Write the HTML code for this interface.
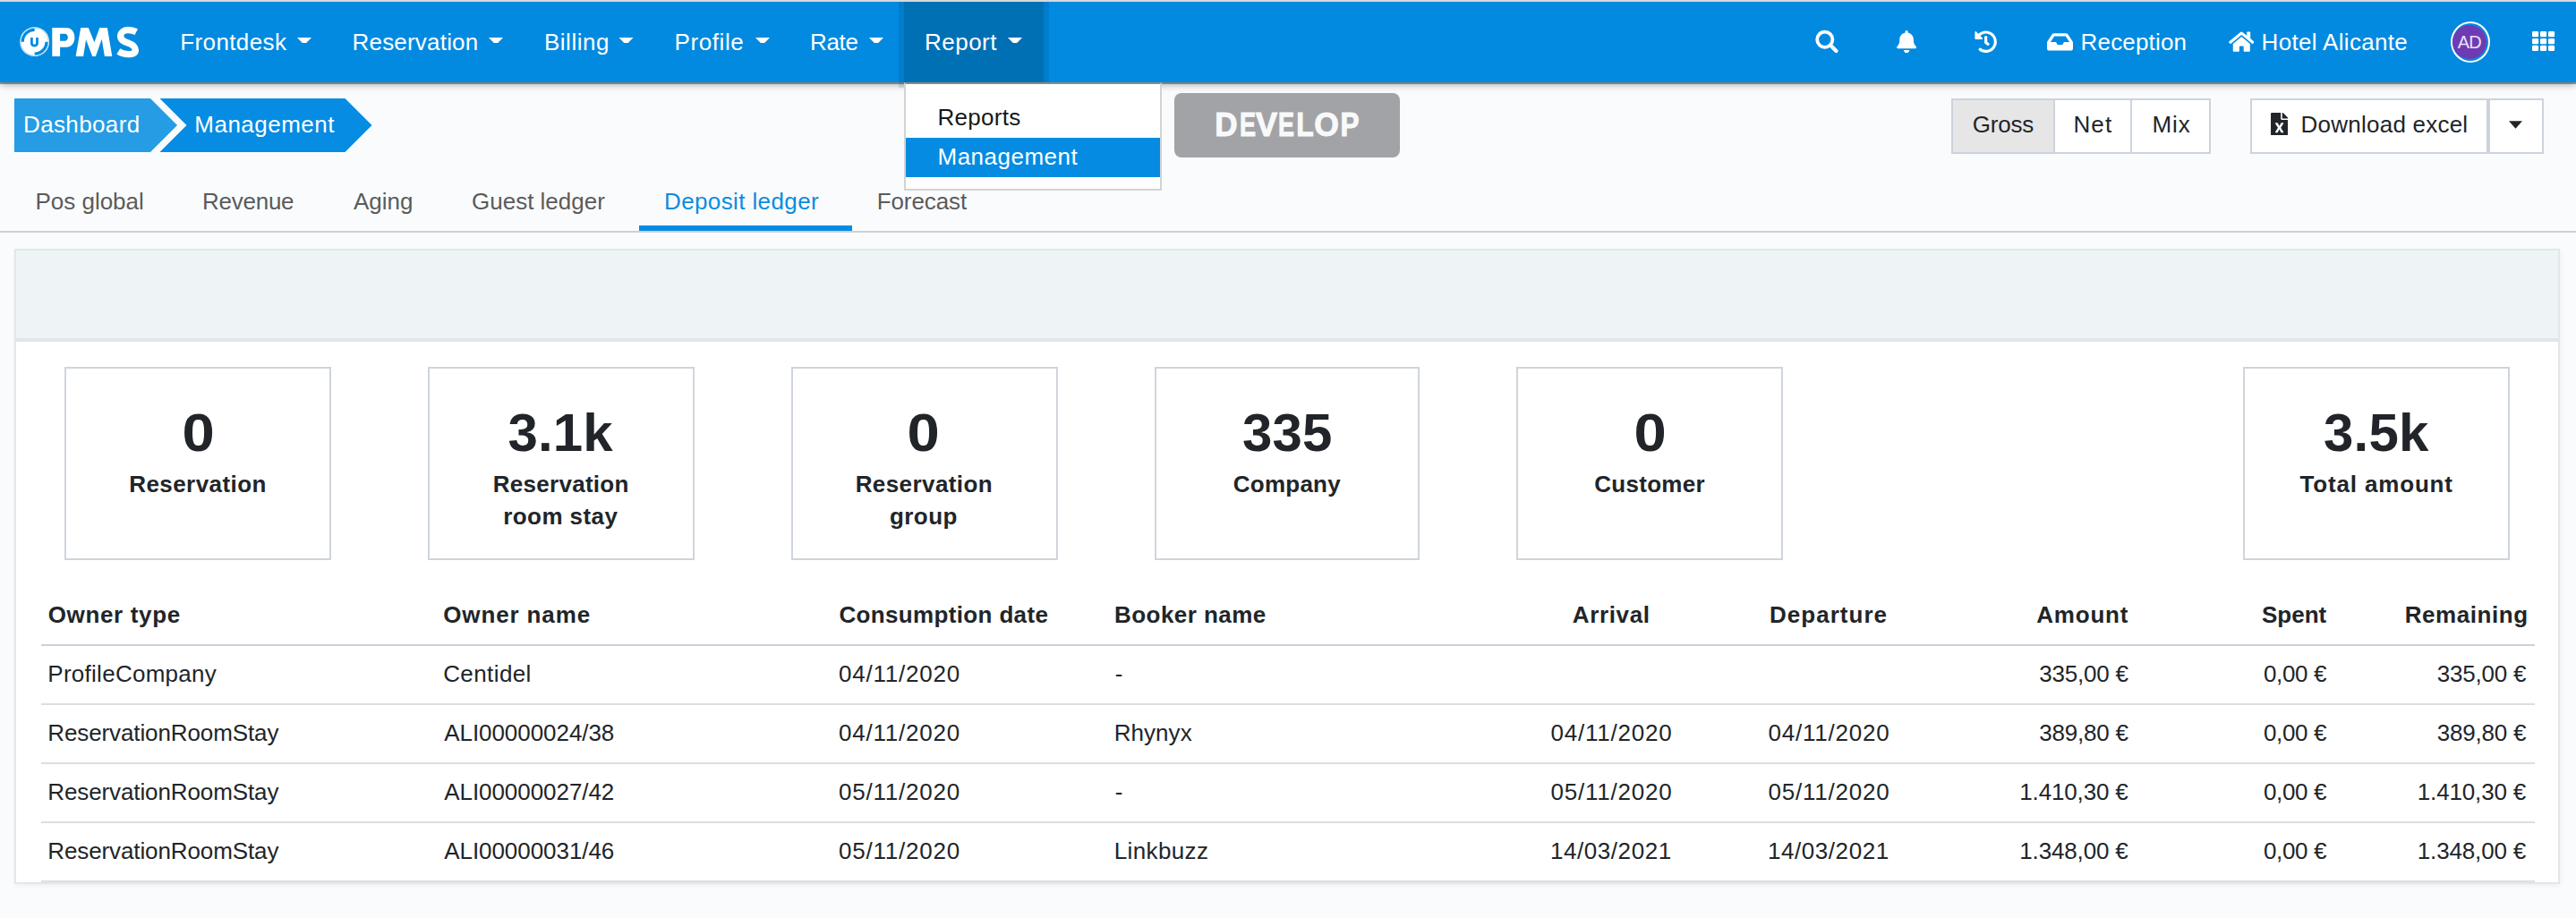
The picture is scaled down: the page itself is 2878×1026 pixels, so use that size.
<!DOCTYPE html>
<html><head><meta charset="utf-8"><title>PMS - Deposit ledger</title>
<style>
html,body{margin:0;padding:0;}
body{width:2878px;height:1026px;overflow:hidden;position:relative;background:#f9fbfd;font-family:"Liberation Sans",sans-serif;}
.a{position:absolute;box-sizing:border-box;}
.t{position:absolute;white-space:nowrap;font-family:"Liberation Sans",sans-serif;}
</style></head><body>
<!-- top chrome line -->
<!-- navbar -->
<div class="a" style="left:0;top:2px;width:2878px;height:90px;background:#018ae0;box-shadow:0 1.5px 0.5px rgba(70,70,70,0.55),0 3px 8px rgba(0,0,0,0.3)"></div>
<div class="a" style="left:1010px;top:2px;width:156px;height:90px;background:#0070b5;box-shadow:0 0 0 6px rgba(0,20,40,0.1);clip-path:inset(-6px -6px 0 -6px)"></div>
<div class="a" style="left:1004px;top:92px;width:6px;height:6px;background:rgba(0,20,40,0.1)"></div>
<div class="a" style="left:0;top:0;width:2878px;height:2px;background:#d8d8da"></div>
<!-- logo -->
<svg class="a" style="left:0;top:0" width="170" height="92" viewBox="0 0 170 92">
 <circle cx="38.65" cy="46.65" r="16.4" fill="#fff"/>
 <circle cx="38.65" cy="46.65" r="15.6" fill="none" stroke="#018ae0" stroke-width="0.6" opacity="0.6"/>
 <path d="M25.3 46.65 A13.35 13.35 0 0 1 38.65 33.3" fill="none" stroke="#018ae0" stroke-width="3.2"/>
 <path d="M52 46.65 A13.35 13.35 0 0 1 38.65 60" fill="none" stroke="#018ae0" stroke-width="3.2"/>
 <path d="M35.4 42 V48.3 Q35.4 51 38.45 51 Q41.5 51 41.5 48.3 V42" fill="none" stroke="#018ae0" stroke-width="2.75"/>
 <path fill="#fff" fill-rule="evenodd" d="M58.3 31 H74 C79.6 31 83.4 35.6 83.4 41.9 C83.4 48.1 79.6 52.7 74 52.7 H67.1 V63 H58.3 Z M67.1 37.8 H72.3 C74.6 37.8 75.8 39.6 75.8 41.8 C75.8 44 74.6 45.8 72.3 45.8 H67.1 Z"/>
 <path fill="#fff" d="M84.6 63 L90.2 31 H98.8 L105.4 47.2 L111.3 31 H119.9 L125.3 63 H116.9 L113.7 43.8 L106.9 63 H103.2 L96.1 44.2 L93.1 63 Z"/>
 <path fill="none" stroke="#fff" stroke-width="7.4" d="M152.3 35.6 C149 33.9 146 33.5 143 33.5 C138 33.5 134.7 36.4 134.7 40.5 C134.7 45 139 46.6 143 48 C148 49.8 151.3 51.6 151.3 56 C151.3 59.8 147.8 60.6 143 60.6 C139 60.6 135.8 59.6 132.3 57.4"/>
</svg>
<!-- carets -->
<svg class="a" style="left:0;top:0" width="1200" height="92">
 <g fill="#fff">
 <polygon points="332,42 348,42 342.2,48 337.8,48"/>
 <polygon points="546,42 562,42 556.2,48 551.8,48"/>
 <polygon points="691.5,42 707.5,42 701.7,48 697.3,48"/>
 <polygon points="844,42 860,42 854.2,48 849.8,48"/>
 <polygon points="971,42 987,42 981.2,48 976.8,48"/>
 <polygon points="1126,42 1142,42 1136.2,48 1131.8,48"/>
 </g>
</svg>
<!-- right icons -->
<svg class="a" style="left:2020px;top:28px" width="40" height="36" viewBox="0 0 40 36">
 <circle cx="18.8" cy="16.2" r="8.6" fill="none" stroke="#fff" stroke-width="3.8"/>
 <line x1="25" y1="22.5" x2="31.5" y2="29" stroke="#fff" stroke-width="4.2" stroke-linecap="round"/>
</svg>
<svg class="a" style="left:2118.8px;top:34px" width="22.2" height="25" viewBox="0 0 448 512">
 <path fill="#fff" d="M224 512c35.32 0 63.97-28.65 63.97-64H160.03c0 35.35 28.65 64 63.97 64zm215.39-149.71c-19.32-20.76-55.47-51.99-55.47-154.29 0-77.7-54.48-139.9-127.940-155.16V32c0-17.67-14.32-32-31.98-32s-31.98 14.330-31.98 32v20.84C118.56 68.1 64.08 130.3 64.08 208c0 102.3-36.15 133.53-55.47 154.29-6 6.45-8.66 14.16-8.61 21.71.11 16.4 12.98 32 32.1 32h383.8c19.12 0 32-15.6 32.1-32 .05-7.55-2.61-15.27-8.61-21.710z"/>
</svg>
<svg class="a" style="left:2206px;top:33.7px" width="25.3" height="25.3" viewBox="0 0 512 512">
 <path fill="#fff" d="M504 255.531c.253 136.64-111.18 248.372-247.82 248.468-59.015.042-113.223-20.53-155.822-54.911-11.077-8.94-11.905-25.541-1.839-35.607l11.267-11.267c8.609-8.609 22.353-9.551 31.891-1.984C173.062 425.135 212.781 440 256 440c101.705 0 184-82.311 184-184 0-101.705-82.311-184-184-184-48.814 0-93.149 18.969-126.068 49.932l50.754 50.754c10.08 10.08 2.941 27.314-11.313 27.314H24c-8.837 0-16-7.163-16-16V38.627c0-14.254 17.234-21.393 27.314-11.314l49.372 49.372C129.209 34.136 189.552 8 256 8c136.81 0 247.747 110.78 248 247.531zm-180.912 78.784l9.823-12.63c8.138-10.463 6.253-25.542-4.21-33.679L288 256.349V152c0-13.255-10.745-24-24-24h-16c-13.255 0-24 10.745-24 24v135.651l65.409 50.874c10.463 8.137 25.541 6.253 33.679-4.21z"/>
</svg>
<svg class="a" style="left:2287px;top:33.7px" width="29" height="25.8" viewBox="0 0 576 512">
 <path fill="#fff" d="M567.938 243.908L462.25 85.374A48.003 48.003 0 0 0 422.311 64H153.689a48 48 0 0 0-39.938 21.374L8.062 243.908A47.994 47.994 0 0 0 0 270.533V400c0 26.51 21.49 48 48 48h480c26.51 0 48-21.49 48-48V270.533a47.994 47.994 0 0 0-8.062-26.625zM162.252 128h251.497l85.333 128H376l-32 64H232l-32-64H76.918l85.334-128z"/>
</svg>
<svg class="a" style="left:2489.5px;top:33.8px" width="28.6" height="25.4" viewBox="0 0 576 512">
 <path fill="#fff" d="M280.37 148.26L96 300.11V464a16 16 0 0 0 16 16l112.06-.29a16 16 0 0 0 15.92-16V368a16 16 0 0 1 16-16h64a16 16 0 0 1 16 16v95.64a16 16 0 0 0 16 16.05L464 480a16 16 0 0 0 16-16V300L295.67 148.26a12.19 12.19 0 0 0-15.3 0zM571.6 251.47L488 182.56V44.050a12 12 0 0 0-12-12h-56a12 12 0 0 0-12 12v72.61L318.47 43a48 48 0 0 0-61 0L4.34 251.47a12 12 0 0 0-1.6 16.9l25.5 31A12 12 0 0 0 45.15 301l235.22-193.74a12.19 12.19 0 0 1 15.3 0L530.9 301a12 12 0 0 0 16.9-1.6l25.5-31a12 12 0 0 0-1.7-16.93z"/>
</svg>
<div class="a" style="left:2738px;top:24px;width:44px;height:46px;border-radius:50%;border:2px solid #fff"></div>
<div class="a" style="left:2740.2px;top:28px;width:38px;height:38px;border-radius:50%;background:#6e3bb5"></div>
<svg class="a" style="left:2829.2px;top:35.4px" width="26" height="23" viewBox="0 0 26 23"><g fill="#fff"><rect x="0" y="0" width="7.1" height="6.2" rx="1.3"/><rect x="9" y="0" width="7.1" height="6.2" rx="1.3"/><rect x="18" y="0" width="7.1" height="6.2" rx="1.3"/><rect x="0" y="8" width="7.1" height="6.2" rx="1.3"/><rect x="9" y="8" width="7.1" height="6.2" rx="1.3"/><rect x="18" y="8" width="7.1" height="6.2" rx="1.3"/><rect x="0" y="15.8" width="7.1" height="6.2" rx="1.3"/><rect x="9" y="15.8" width="7.1" height="6.2" rx="1.3"/><rect x="18" y="15.8" width="7.1" height="6.2" rx="1.3"/></g></svg>
<!-- breadcrumb -->
<svg class="a" style="left:0;top:100px" width="430" height="80" viewBox="0 100 430 80">
 <polygon points="16,110 168,110 198,140 168,170 16,170" fill="#259ce4"/>
 <polygon points="178.5,110 385.5,110 415.5,140 385.5,170 178.5,170 208.5,140" fill="#068ce2"/>
</svg>
<!-- tabs -->
<div class="a" style="left:0;top:258px;width:2878px;height:2px;background:#cfd0d1"></div>
<div class="a" style="left:714px;top:252px;width:238px;height:6px;background:#058ce2"></div>
<!-- dropdown -->
<div class="a" style="left:1010px;top:92px;width:288px;height:121px;background:#fff;border:2px solid #d3d3d3;border-top:2px solid #8a8886"></div>
<div class="a" style="left:1012px;top:154px;width:284px;height:44px;background:#058ce2"></div>
<!-- develop -->
<div class="a" style="left:1312px;top:104px;width:252px;height:72px;background:#a2a3a6;border-radius:8px"></div>
<!-- gross net mix -->
<div class="a" style="left:2180px;top:110px;width:290px;height:62px;background:#fff;border:2px solid #ccd3dc"></div>
<div class="a" style="left:2182px;top:112px;width:112px;height:58px;background:#e6e6e6"></div>
<div class="a" style="left:2294px;top:112px;width:2px;height:58px;background:#ccd3dc"></div>
<div class="a" style="left:2380px;top:112px;width:2px;height:58px;background:#ccd3dc"></div>
<!-- download -->
<div class="a" style="left:2514px;top:110px;width:266px;height:62px;background:#fff;border:2px solid #ccd3dc"></div>
<div class="a" style="left:2780px;top:110px;width:62px;height:62px;background:#fff;border:2px solid #ccd3dc"></div>
<svg class="a" style="left:2536.7px;top:125.7px" width="19.2" height="25.5" viewBox="0 0 384 512">
 <path fill="#212529" d="M224 136V0H24C10.7 0 0 10.7 0 24v464c0 13.3 10.7 24 24 24h336c13.3 0 24-10.7 24-24V160H248c-13.2 0-24-10.8-24-24zm60.1 106.5L224 336l60.1 93.5c5.1 8-.6 18.5-10.100 18.5h-34.9c-4.4 0-8.5-2.4-10.6-6.3C208.9 405.5 192 373 192 373c-6.4 14.8-10 20-36.6 68.8-2.1 3.9-6.1 6.3-10.5 6.3H110c-9.5 0-15.2-10.5-10.1-18.5l60.3-93.5-60.3-93.5c-5.2-8 .6-18.5 10.1-18.5h34.8c4.4 0 8.5 2.4 10.6 6.3 26.1 48.8 20 33.6 36.6 68.5 0 0 6.1-11.7 36.6-68.5 2.1-3.9 6.2-6.3 10.6-6.3H274c9.5-.1 15.2 10.4 10.1 18.4zM384 121.9v6.1H256V0h6.1c6.4 0 12.5 2.5 17 7l97.9 98c4.5 4.5 7 10.6 7 16.9z"/>
</svg>
<svg class="a" style="left:2800px;top:133px" width="20" height="14"><polygon points="3,2.2 18,2.2 10.5,10.7" fill="#212529"/></svg>
<!-- panel -->
<div class="a" style="left:16px;top:278px;width:2844px;height:710px;background:#fff;border:2px solid #e3e7ea;box-shadow:1px 2px 5px rgba(0,0,0,0.05)"></div>
<div class="a" style="left:16px;top:278px;width:2844px;height:104px;background:#eef3f6;border:2px solid #e3e7ea;border-bottom:4px solid #e1e6e9"></div>
<!-- cards -->
<div class="a" style="left:72px;top:410px;width:298px;height:216px;border:2px solid #cfd5dc"></div>
<div class="a" style="left:478px;top:410px;width:298px;height:216px;border:2px solid #cfd5dc"></div>
<div class="a" style="left:884px;top:410px;width:298px;height:216px;border:2px solid #cfd5dc"></div>
<div class="a" style="left:1290px;top:410px;width:296px;height:216px;border:2px solid #cfd5dc"></div>
<div class="a" style="left:1694px;top:410px;width:298px;height:216px;border:2px solid #cfd5dc"></div>
<div class="a" style="left:2506px;top:410px;width:298px;height:216px;border:2px solid #cfd5dc"></div>
<!-- table lines -->
<div class="a" style="left:46px;top:720px;width:2786px;height:2px;background:#c8d1d9"></div>
<div class="a" style="left:46px;top:786px;width:2786px;height:2px;background:#dcdee0"></div>
<div class="a" style="left:46px;top:852px;width:2786px;height:2px;background:#dcdee0"></div>
<div class="a" style="left:46px;top:918px;width:2786px;height:2px;background:#dcdee0"></div>
<div class="a" style="left:46px;top:984px;width:2786px;height:2px;background:#dcdee0"></div>
<div class='t' style='left:201.3px;top:34.0px;font-size:26px;line-height:26px;font-weight:400;color:#fff;letter-spacing:0.375px;'>Frontdesk</div>
<div class='t' style='left:393.5px;top:34.0px;font-size:26px;line-height:26px;font-weight:400;color:#fff;letter-spacing:0.2px;'>Reservation</div>
<div class='t' style='left:608.0px;top:34.0px;font-size:26px;line-height:26px;font-weight:400;color:#fff;letter-spacing:0.5px;'>Billing</div>
<div class='t' style='left:753.6px;top:34.0px;font-size:26px;line-height:26px;font-weight:400;color:#fff;letter-spacing:0.567px;'>Profile</div>
<div class='t' style='left:905.0px;top:34.0px;font-size:26px;line-height:26px;font-weight:400;color:#fff;letter-spacing:-0.333px;'>Rate</div>
<div class='t' style='left:1033.0px;top:34.0px;font-size:26px;line-height:26px;font-weight:400;color:#fff;letter-spacing:0.48px;'>Report</div>
<div class='t' style='left:2324.6px;top:34.0px;font-size:26px;line-height:26px;font-weight:400;color:#fff;letter-spacing:0.175px;'>Reception</div>
<div class='t' style='left:2526.6px;top:34.0px;font-size:26px;line-height:26px;font-weight:400;color:#fff;letter-spacing:0.323px;'>Hotel Alicante</div>
<div class='t' style='left:2745.8px;top:37.2px;font-size:20px;line-height:20px;font-weight:400;color:#e9e1f6;letter-spacing:-0.8px;'>AD</div>
<div class='t' style='left:26.0px;top:126.0px;font-size:26px;line-height:26px;font-weight:400;color:#fff;letter-spacing:0.375px;'>Dashboard</div>
<div class='t' style='left:217.3px;top:126.0px;font-size:26px;line-height:26px;font-weight:400;color:#fff;letter-spacing:0.489px;'>Management</div>
<div class='t' style='left:1047.5px;top:118.0px;font-size:26px;line-height:26px;font-weight:400;color:#16181b;letter-spacing:0.283px;'>Reports</div>
<div class='t' style='left:1047.5px;top:162.0px;font-size:26px;line-height:26px;font-weight:400;color:#fff;letter-spacing:0.5px;'>Management</div>
<div class='t' style='left:1357.3px;top:122.0px;font-size:36px;line-height:36px;font-weight:700;color:#f8f9fa;letter-spacing:0px;transform:scaleX(0.974);transform-origin:13.5px 0;-webkit-text-stroke:1px #f8f9fa;'>D</div>
<div class='t' style='left:1381.8px;top:122.0px;font-size:36px;line-height:36px;font-weight:700;color:#f8f9fa;letter-spacing:0px;transform:scaleX(0.752);transform-origin:12.5px 0;-webkit-text-stroke:1px #f8f9fa;'>E</div>
<div class='t' style='left:1403.2px;top:122.0px;font-size:36px;line-height:36px;font-weight:700;color:#f8f9fa;letter-spacing:0px;transform:scaleX(1.017);transform-origin:12.0px 0;-webkit-text-stroke:1px #f8f9fa;'>V</div>
<div class='t' style='left:1425.3px;top:122.0px;font-size:36px;line-height:36px;font-weight:700;color:#f8f9fa;letter-spacing:0px;transform:scaleX(0.752);transform-origin:12.5px 0;-webkit-text-stroke:1px #f8f9fa;'>E</div>
<div class='t' style='left:1446.9px;top:122.0px;font-size:36px;line-height:36px;font-weight:700;color:#f8f9fa;letter-spacing:0px;transform:scaleX(0.884);transform-origin:11.5px 0;-webkit-text-stroke:1px #f8f9fa;'>L</div>
<div class='t' style='left:1467.8px;top:122.0px;font-size:36px;line-height:36px;font-weight:700;color:#f8f9fa;letter-spacing:0px;transform:scaleX(0.985);transform-origin:14.0px 0;-webkit-text-stroke:1px #f8f9fa;'>O</div>
<div class='t' style='left:1495.7px;top:122.0px;font-size:36px;line-height:36px;font-weight:700;color:#f8f9fa;letter-spacing:0px;transform:scaleX(0.876);transform-origin:12.5px 0;-webkit-text-stroke:1px #f8f9fa;'>P</div>
<div class='t' style='left:39.5px;top:212.0px;font-size:26px;line-height:26px;font-weight:400;color:#5b5b5b;letter-spacing:-0.022px;'>Pos global</div>
<div class='t' style='left:226.0px;top:212.0px;font-size:26px;line-height:26px;font-weight:400;color:#5b5b5b;letter-spacing:-0.25px;'>Revenue</div>
<div class='t' style='left:395.0px;top:212.0px;font-size:26px;line-height:26px;font-weight:400;color:#5b5b5b;letter-spacing:0.0px;'>Aging</div>
<div class='t' style='left:527.0px;top:212.0px;font-size:26px;line-height:26px;font-weight:400;color:#5b5b5b;letter-spacing:0.0px;'>Guest ledger</div>
<div class='t' style='left:742.0px;top:212.0px;font-size:26px;line-height:26px;font-weight:400;color:#0b8ce0;letter-spacing:0.385px;'>Deposit ledger</div>
<div class='t' style='left:979.7px;top:212.0px;font-size:26px;line-height:26px;font-weight:400;color:#5b5b5b;letter-spacing:-0.1px;'>Forecast</div>
<div class='t' style='left:2203.7px;top:126.0px;font-size:26px;line-height:26px;font-weight:400;color:#212529;letter-spacing:-0.175px;'>Gross</div>
<div class='t' style='left:2316.4px;top:126.0px;font-size:26px;line-height:26px;font-weight:400;color:#212529;letter-spacing:1.2px;'>Net</div>
<div class='t' style='left:2404.6px;top:126.0px;font-size:26px;line-height:26px;font-weight:400;color:#212529;letter-spacing:0.85px;'>Mix</div>
<div class='t' style='left:2570.6px;top:126.0px;font-size:26px;line-height:26px;font-weight:400;color:#212529;letter-spacing:0.231px;'>Download excel</div>
<div class='t' style='left:204.5px;top:454.0px;font-size:60px;line-height:60px;font-weight:700;color:#212529;letter-spacing:0px;transform:scaleX(1.086);transform-origin:16.5px 0;'>0</div>
<div class='t' style='left:567.5px;top:454.0px;font-size:60px;line-height:60px;font-weight:700;color:#212529;letter-spacing:0.1px;'>3.1k</div>
<div class='t' style='left:1015.3px;top:454.0px;font-size:60px;line-height:60px;font-weight:700;color:#212529;letter-spacing:0px;transform:scaleX(1.086);transform-origin:16.5px 0;'>0</div>
<div class='t' style='left:1387.9px;top:454.0px;font-size:60px;line-height:60px;font-weight:700;color:#212529;letter-spacing:0.15px;'>335</div>
<div class='t' style='left:1826.8px;top:454.0px;font-size:60px;line-height:60px;font-weight:700;color:#212529;letter-spacing:0px;transform:scaleX(1.086);transform-origin:16.5px 0;'>0</div>
<div class='t' style='left:2596.0px;top:454.0px;font-size:60px;line-height:60px;font-weight:700;color:#212529;letter-spacing:0.2px;'>3.5k</div>
<div class='t' style='left:144.2px;top:528.0px;font-size:26px;line-height:26px;font-weight:700;color:#212529;letter-spacing:0.44px;'>Reservation</div>
<div class='t' style='left:550.7px;top:528.0px;font-size:26px;line-height:26px;font-weight:700;color:#212529;letter-spacing:0.29px;'>Reservation</div>
<div class='t' style='left:562.2px;top:564.0px;font-size:26px;line-height:26px;font-weight:700;color:#212529;letter-spacing:0.438px;'>room stay</div>
<div class='t' style='left:955.7px;top:528.0px;font-size:26px;line-height:26px;font-weight:700;color:#212529;letter-spacing:0.41px;'>Reservation</div>
<div class='t' style='left:994.0px;top:564.0px;font-size:26px;line-height:26px;font-weight:700;color:#212529;letter-spacing:0.425px;'>group</div>
<div class='t' style='left:1377.8px;top:528.0px;font-size:26px;line-height:26px;font-weight:700;color:#212529;letter-spacing:0.233px;'>Company</div>
<div class='t' style='left:1781.3px;top:528.0px;font-size:26px;line-height:26px;font-weight:700;color:#212529;letter-spacing:0.271px;'>Customer</div>
<div class='t' style='left:2569.5px;top:528.0px;font-size:26px;line-height:26px;font-weight:700;color:#212529;letter-spacing:0.836px;'>Total amount</div>
<div class='t' style='left:53.7px;top:674.0px;font-size:26px;line-height:26px;font-weight:700;color:#212529;letter-spacing:0.656px;'>Owner type</div>
<div class='t' style='left:495.2px;top:674.0px;font-size:26px;line-height:26px;font-weight:700;color:#212529;letter-spacing:0.878px;'>Owner name</div>
<div class='t' style='left:937.4px;top:674.0px;font-size:26px;line-height:26px;font-weight:700;color:#212529;letter-spacing:0.353px;'>Consumption date</div>
<div class='t' style='left:1245.0px;top:674.0px;font-size:26px;line-height:26px;font-weight:700;color:#212529;letter-spacing:0.46px;'>Booker name</div>
<div class='t' style='left:1756.8px;top:674.0px;font-size:26px;line-height:26px;font-weight:700;color:#212529;letter-spacing:0.633px;'>Arrival</div>
<div class='t' style='left:1977.0px;top:674.0px;font-size:26px;line-height:26px;font-weight:700;color:#212529;letter-spacing:1.025px;'>Departure</div>
<div class='t' style='left:2275.3px;top:674.0px;font-size:26px;line-height:26px;font-weight:700;color:#212529;letter-spacing:0.78px;'>Amount</div>
<div class='t' style='left:2526.9px;top:674.0px;font-size:26px;line-height:26px;font-weight:700;color:#212529;letter-spacing:0.025px;'>Spent</div>
<div class='t' style='left:2686.8px;top:674.0px;font-size:26px;line-height:26px;font-weight:700;color:#212529;letter-spacing:0.538px;'>Remaining</div>
<div class='t' style='left:53.3px;top:740.0px;font-size:26px;line-height:26px;font-weight:400;color:#212529;letter-spacing:0.269px;'>ProfileCompany</div>
<div class='t' style='left:495.2px;top:740.0px;font-size:26px;line-height:26px;font-weight:400;color:#212529;letter-spacing:0.4px;'>Centidel</div>
<div class='t' style='left:937.0px;top:740.0px;font-size:26px;line-height:26px;font-weight:400;color:#212529;letter-spacing:0.778px;'>04/11/2020</div>
<div class='t' style='left:1245.7px;top:740.0px;font-size:26px;line-height:26px;font-weight:400;color:#212529;letter-spacing:0px;'>-</div>
<div class='t' style='left:2278.3px;top:740.0px;font-size:26px;line-height:26px;font-weight:400;color:#212529;letter-spacing:-0.214px;'>335,00 €</div>
<div class='t' style='left:2528.9px;top:740.0px;font-size:26px;line-height:26px;font-weight:400;color:#212529;letter-spacing:-0.32px;'>0,00 €</div>
<div class='t' style='left:2722.8px;top:740.0px;font-size:26px;line-height:26px;font-weight:400;color:#212529;letter-spacing:-0.214px;'>335,00 €</div>
<div class='t' style='left:53.3px;top:806.0px;font-size:26px;line-height:26px;font-weight:400;color:#212529;letter-spacing:-0.111px;'>ReservationRoomStay</div>
<div class='t' style='left:496.2px;top:806.0px;font-size:26px;line-height:26px;font-weight:400;color:#212529;letter-spacing:-0.054px;'>ALI00000024/38</div>
<div class='t' style='left:937.0px;top:806.0px;font-size:26px;line-height:26px;font-weight:400;color:#212529;letter-spacing:0.778px;'>04/11/2020</div>
<div class='t' style='left:1244.7px;top:806.0px;font-size:26px;line-height:26px;font-weight:400;color:#212529;letter-spacing:0.06px;'>Rhynyx</div>
<div class='t' style='left:1732.5px;top:806.0px;font-size:26px;line-height:26px;font-weight:400;color:#212529;letter-spacing:0.778px;'>04/11/2020</div>
<div class='t' style='left:1975.5px;top:806.0px;font-size:26px;line-height:26px;font-weight:400;color:#212529;letter-spacing:0.778px;'>04/11/2020</div>
<div class='t' style='left:2278.3px;top:806.0px;font-size:26px;line-height:26px;font-weight:400;color:#212529;letter-spacing:-0.214px;'>389,80 €</div>
<div class='t' style='left:2528.9px;top:806.0px;font-size:26px;line-height:26px;font-weight:400;color:#212529;letter-spacing:-0.32px;'>0,00 €</div>
<div class='t' style='left:2722.8px;top:806.0px;font-size:26px;line-height:26px;font-weight:400;color:#212529;letter-spacing:-0.214px;'>389,80 €</div>
<div class='t' style='left:53.3px;top:872.0px;font-size:26px;line-height:26px;font-weight:400;color:#212529;letter-spacing:-0.111px;'>ReservationRoomStay</div>
<div class='t' style='left:496.2px;top:872.0px;font-size:26px;line-height:26px;font-weight:400;color:#212529;letter-spacing:-0.054px;'>ALI00000027/42</div>
<div class='t' style='left:937.0px;top:872.0px;font-size:26px;line-height:26px;font-weight:400;color:#212529;letter-spacing:0.778px;'>05/11/2020</div>
<div class='t' style='left:1245.7px;top:872.0px;font-size:26px;line-height:26px;font-weight:400;color:#212529;letter-spacing:0px;'>-</div>
<div class='t' style='left:1732.5px;top:872.0px;font-size:26px;line-height:26px;font-weight:400;color:#212529;letter-spacing:0.778px;'>05/11/2020</div>
<div class='t' style='left:1975.5px;top:872.0px;font-size:26px;line-height:26px;font-weight:400;color:#212529;letter-spacing:0.778px;'>05/11/2020</div>
<div class='t' style='left:2256.3px;top:872.0px;font-size:26px;line-height:26px;font-weight:400;color:#212529;letter-spacing:-0.156px;'>1.410,30 €</div>
<div class='t' style='left:2528.9px;top:872.0px;font-size:26px;line-height:26px;font-weight:400;color:#212529;letter-spacing:-0.32px;'>0,00 €</div>
<div class='t' style='left:2700.8px;top:872.0px;font-size:26px;line-height:26px;font-weight:400;color:#212529;letter-spacing:-0.156px;'>1.410,30 €</div>
<div class='t' style='left:53.3px;top:938.0px;font-size:26px;line-height:26px;font-weight:400;color:#212529;letter-spacing:-0.111px;'>ReservationRoomStay</div>
<div class='t' style='left:496.2px;top:938.0px;font-size:26px;line-height:26px;font-weight:400;color:#212529;letter-spacing:-0.054px;'>ALI00000031/46</div>
<div class='t' style='left:937.0px;top:938.0px;font-size:26px;line-height:26px;font-weight:400;color:#212529;letter-spacing:0.778px;'>05/11/2020</div>
<div class='t' style='left:1244.7px;top:938.0px;font-size:26px;line-height:26px;font-weight:400;color:#212529;letter-spacing:0.386px;'>Linkbuzz</div>
<div class='t' style='left:1732.0px;top:938.0px;font-size:26px;line-height:26px;font-weight:400;color:#212529;letter-spacing:0.556px;'>14/03/2021</div>
<div class='t' style='left:1975.0px;top:938.0px;font-size:26px;line-height:26px;font-weight:400;color:#212529;letter-spacing:0.556px;'>14/03/2021</div>
<div class='t' style='left:2256.3px;top:938.0px;font-size:26px;line-height:26px;font-weight:400;color:#212529;letter-spacing:-0.156px;'>1.348,00 €</div>
<div class='t' style='left:2528.9px;top:938.0px;font-size:26px;line-height:26px;font-weight:400;color:#212529;letter-spacing:-0.32px;'>0,00 €</div>
<div class='t' style='left:2700.8px;top:938.0px;font-size:26px;line-height:26px;font-weight:400;color:#212529;letter-spacing:-0.156px;'>1.348,00 €</div>
</body></html>
